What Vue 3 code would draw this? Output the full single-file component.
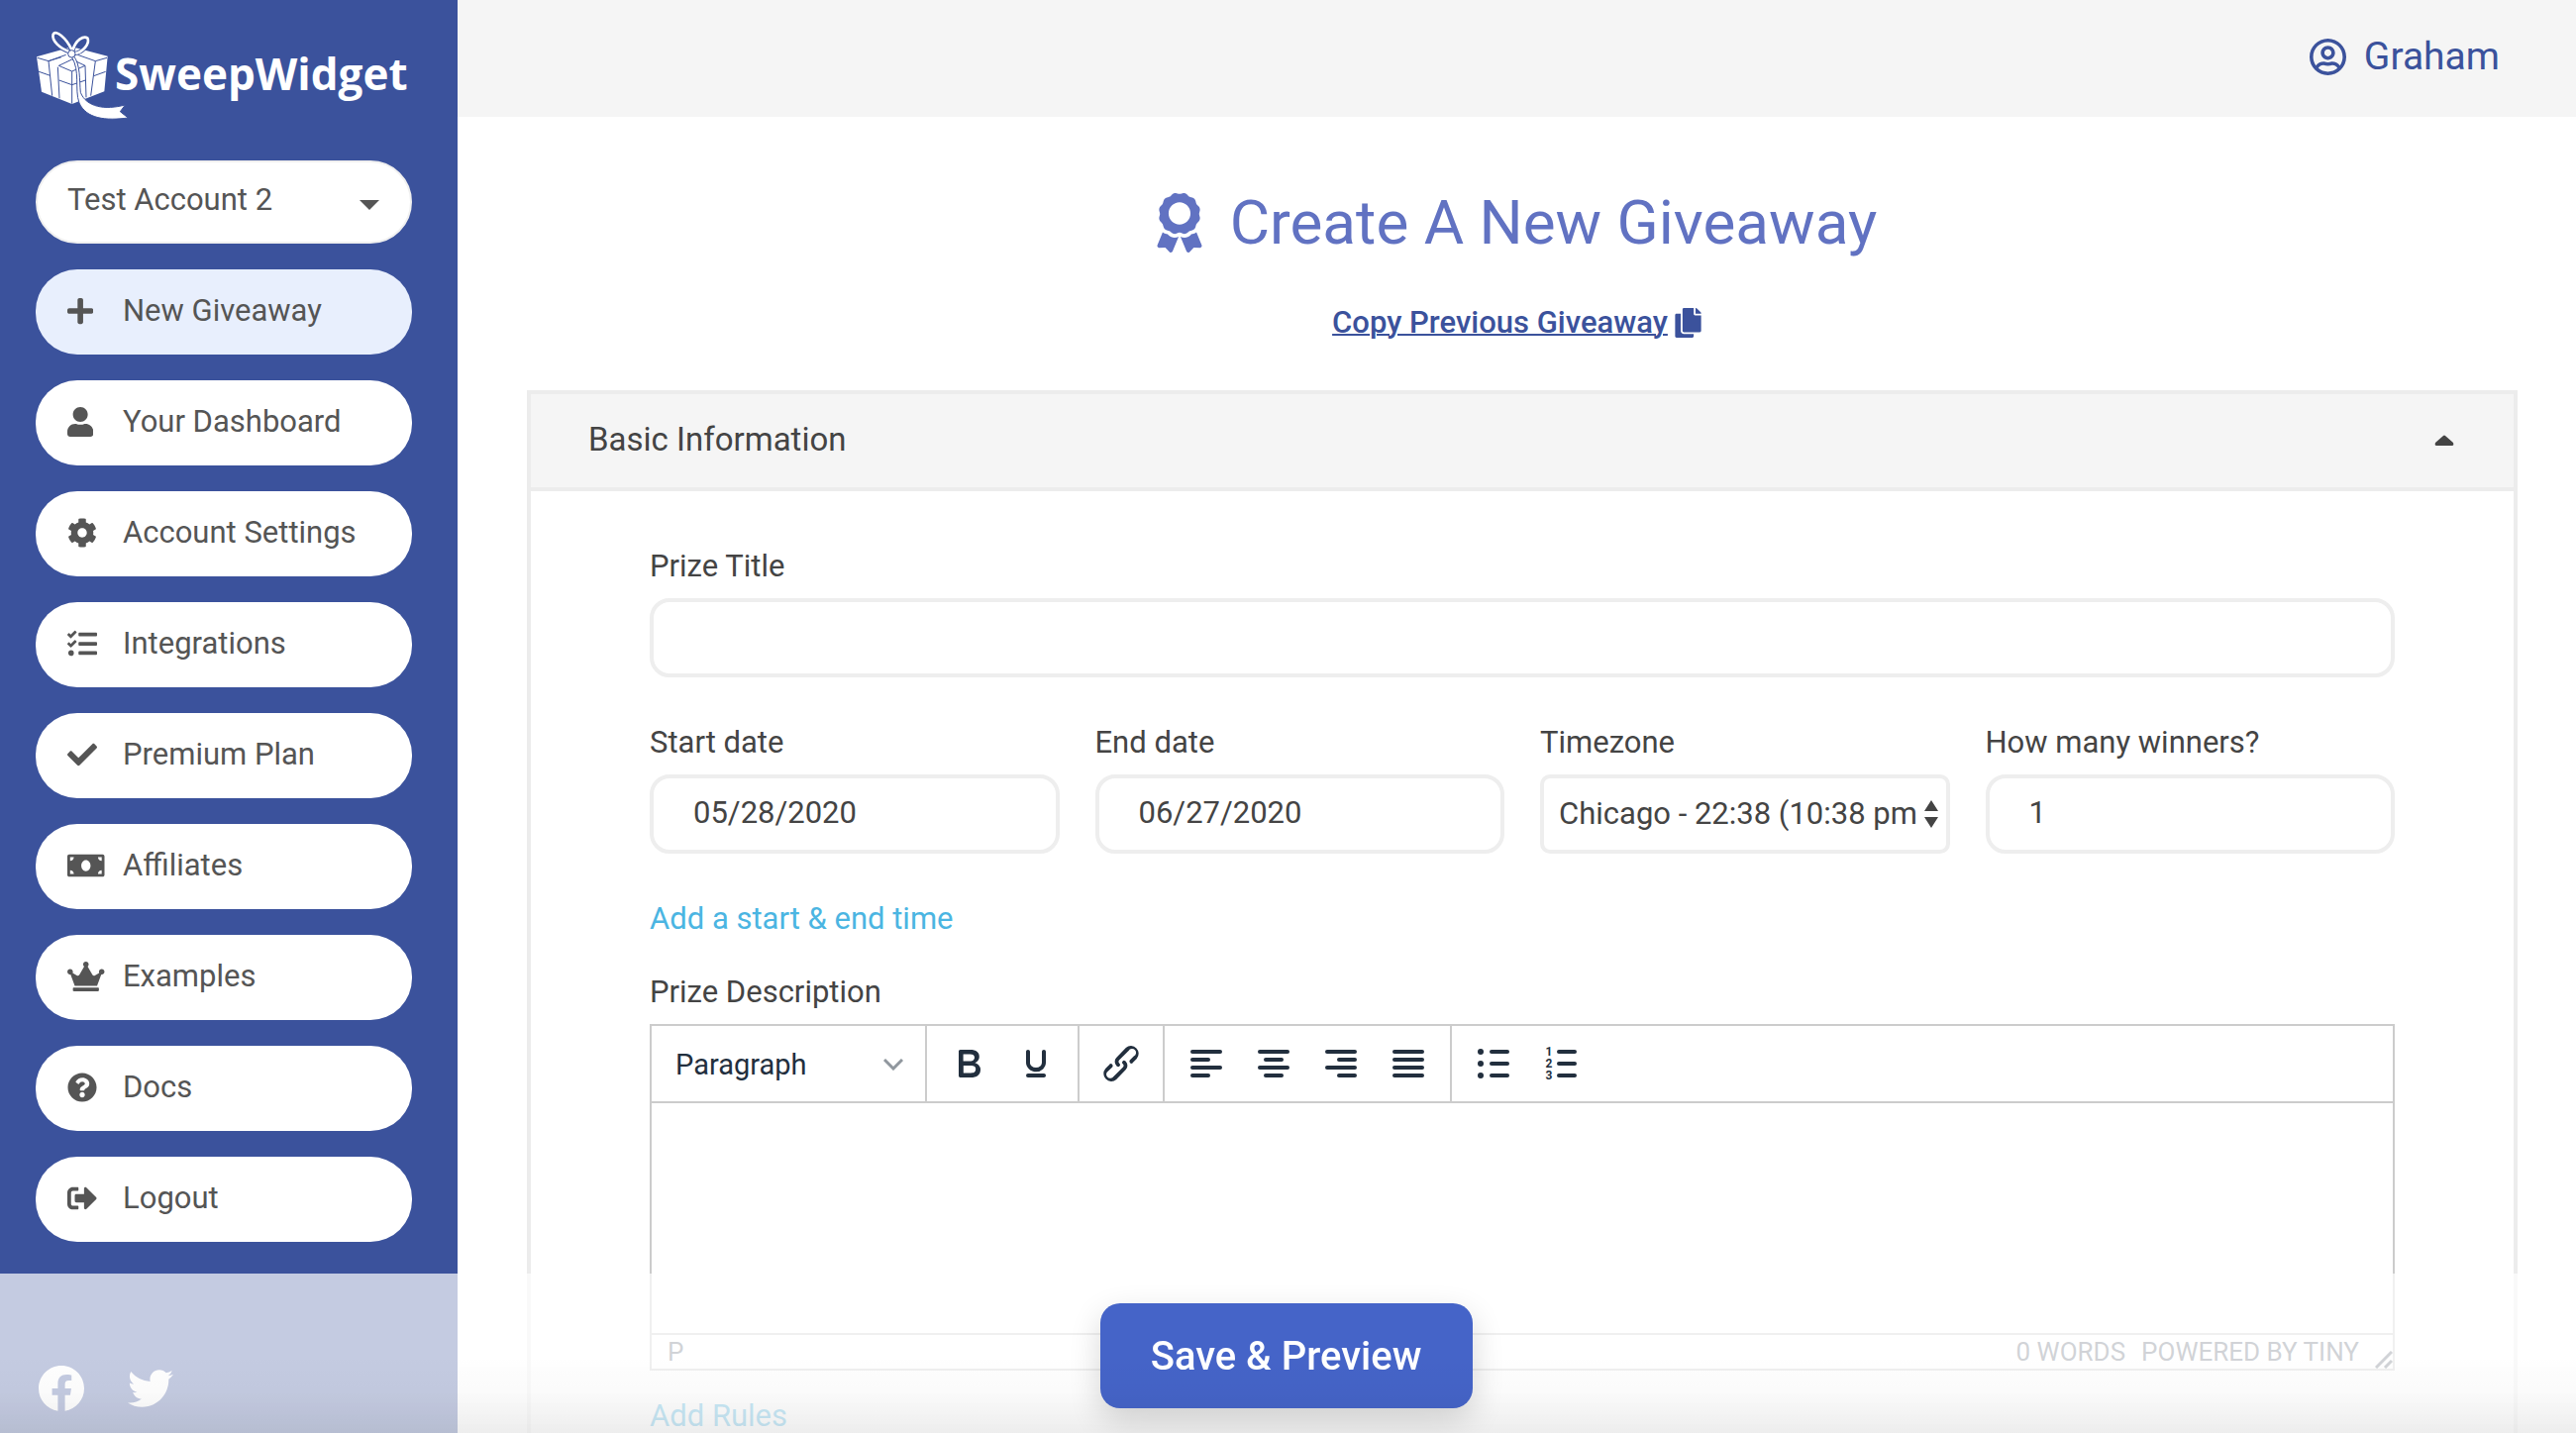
<script setup>
import { ref } from 'vue'

const account = ref('Test Account 2')
const title = ref('')
const startDate = ref('05/28/2020')
const endDate = ref('06/27/2020')
const timezone = ref('Chicago - 22:38 (10:38 pm)')
const winners = ref('1')
const description = ref('')

const menu = [
  { label: 'New Giveaway', w: 448, active: true, d: 'M416 208H272V64c0-17.67-14.33-32-32-32h-32c-17.67 0-32 14.33-32 32v144H32c-17.67 0-32 14.33-32 32v32c0 17.67 14.33 32 32 32h144v144c0 17.67 14.33 32 32 32h32c17.67 0 32-14.33 32-32V304h144c17.67 0 32-14.33 32-32v-32c0-17.67-14.33-32-32-32z' },
  { label: 'Your Dashboard', w: 448, d: 'M224 256c70.7 0 128-57.3 128-128S294.7 0 224 0 96 57.3 96 128s57.3 128 128 128zm89.6 32h-16.7c-22.2 10.2-46.9 16-72.9 16s-50.6-5.8-72.9-16h-16.7C60.2 288 0 348.2 0 422.4V464c0 26.5 21.5 48 48 48h352c26.5 0 48-21.5 48-48v-41.6c0-74.2-60.2-134.4-134.4-134.4z' },
  { label: 'Account Settings', w: 512, d: 'M487.4 315.7l-42.6-24.6c4.3-23.2 4.3-47 0-70.2l42.6-24.6c4.9-2.8 7.1-8.6 5.5-14-11.1-35.6-30-67.8-54.7-94.6-3.8-4.1-10-5.1-14.8-2.3L380.8 110c-17.9-15.4-38.5-27.3-60.8-35.1V25.8c0-5.6-3.9-10.5-9.4-11.7-36.7-8.2-74.3-7.8-109.2 0-5.5 1.2-9.4 6.1-9.4 11.7V75c-22.2 7.9-42.8 19.8-60.8 35.1L88.7 85.5c-4.9-2.8-11-1.9-14.8 2.3-24.7 26.7-43.6 58.9-54.7 94.6-1.7 5.4.6 11.2 5.5 14L67.3 221c-4.3 23.2-4.3 47 0 70.2l-42.6 24.6c-4.9 2.8-7.1 8.6-5.5 14 11.1 35.6 30 67.8 54.7 94.6 3.8 4.1 10 5.1 14.8 2.3l42.6-24.6c17.9 15.4 38.5 27.3 60.8 35.1v49.2c0 5.6 3.9 10.5 9.4 11.7 36.7 8.2 74.3 7.8 109.2 0 5.5-1.2 9.4-6.1 9.4-11.7v-49.2c22.2-7.9 42.8-19.8 60.8-35.1l42.6 24.6c4.9 2.8 11 1.9 14.8-2.3 24.7-26.7 43.6-58.9 54.7-94.6 1.5-5.5-.7-11.3-5.6-14.1zM256 336c-44.1 0-80-35.9-80-80s35.9-80 80-80 80 35.9 80 80-35.9 80-80 80z' },
  { label: 'Integrations', w: 512, d: 'M139.61 35.5a12 12 0 0 0-17 0L58.93 98.81l-22.7-22.12a12 12 0 0 0-17 0L3.53 92.41a12 12 0 0 0 0 17l47.59 47.4a12.78 12.78 0 0 0 17.61 0l15.59-15.62L156.52 69a12.09 12.09 0 0 0 .09-17zm0 159.19a12 12 0 0 0-17 0l-63.68 63.72-22.7-22.1a12 12 0 0 0-17 0L3.53 252a12 12 0 0 0 0 17L51 316.5a12.77 12.77 0 0 0 17.6 0l15.7-15.69 72.2-72.22a12 12 0 0 0 .09-16.9zM64 368c-26.49 0-48.59 21.5-48.59 48S37.53 464 64 464a48 48 0 0 0 0-96zm432 16H208a16 16 0 0 0-16 16v32a16 16 0 0 0 16 16h288a16 16 0 0 0 16-16v-32a16 16 0 0 0-16-16zm0-320H208a16 16 0 0 0-16 16v32a16 16 0 0 0 16 16h288a16 16 0 0 0 16-16V80a16 16 0 0 0-16-16zm0 160H208a16 16 0 0 0-16 16v32a16 16 0 0 0 16 16h288a16 16 0 0 0 16-16v-32a16 16 0 0 0-16-16z' },
  { label: 'Premium Plan', w: 512, d: 'M173.898 439.404l-166.4-166.4c-9.997-9.997-9.997-26.206 0-36.204l36.203-36.204c9.997-9.998 26.207-9.998 36.204 0L192 312.69 432.095 72.596c9.997-9.997 26.207-9.997 36.204 0l36.203 36.204c9.997 9.997 9.997 26.206 0 36.204l-294.4 294.401c-9.998 9.997-26.207 9.997-36.204-.001z' },
  { label: 'Affiliates', w: 640, d: 'M608 64H32C14.33 64 0 78.33 0 96v320c0 17.67 14.33 32 32 32h576c17.67 0 32-14.33 32-32V96c0-17.67-14.33-32-32-32zM48 400v-64c35.35 0 64 28.65 64 64H48zm0-224v-64h64c0 35.35-28.65 64-64 64zm272 176c-44.19 0-80-42.99-80-96 0-53.02 35.82-96 80-96s80 42.98 80 96c0 53.03-35.83 96-80 96zm272 48h-64c0-35.35 28.65-64 64-64v64zm0-224c-35.35 0-64-28.65-64-64h64v64z' },
  { label: 'Examples', w: 640, d: 'M528 448H112c-8.8 0-16 7.2-16 16v32c0 8.8 7.2 16 16 16h416c8.8 0 16-7.2 16-16v-32c0-8.8-7.2-16-16-16zm64-320c-26.5 0-48 21.5-48 48 0 7.1 1.6 13.7 4.4 19.8L476 239.2c-15.4 9.2-35.3 4-44.2-11.6L350.3 85C361 76.2 368 63 368 48c0-26.5-21.5-48-48-48s-48 21.5-48 48c0 15 7 28.2 17.7 37l-81.5 142.6c-8.9 15.6-28.9 20.8-44.2 11.6l-72.3-43.4c2.7-6 4.4-12.7 4.4-19.8 0-26.5-21.5-48-48-48S0 149.5 0 176s21.5 48 48 48c2.6 0 5.2-.4 7.7-.8L128 416h384l72.3-192.8c2.5.4 5.1.8 7.7.8 26.5 0 48-21.5 48-48s-21.5-48-48-48z' },
  { label: 'Docs', w: 512, d: 'M504 256c0 136.997-111.043 248-248 248S8 392.997 8 256C8 119.083 119.043 8 256 8s248 111.083 248 248zM262.655 90c-54.497 0-89.255 22.957-116.549 63.758-3.536 5.286-2.353 12.415 2.715 16.258l34.699 26.31c5.205 3.947 12.621 3.008 16.665-2.122 17.864-22.658 30.113-35.797 57.303-35.797 20.429 0 45.698 13.148 45.698 32.958 0 14.976-12.363 22.667-32.534 33.976C247.128 238.528 216 254.941 216 296v4c0 6.627 5.373 12 12 12h56c6.627 0 12-5.373 12-12v-1.333c0-28.462 83.186-29.647 83.186-106.667 0-58.002-60.165-102-116.531-102zM256 338c-25.365 0-46 20.635-46 46 0 25.364 20.635 46 46 46s46-20.636 46-46c0-25.365-20.635-46-46-46z' },
  { label: 'Logout', w: 512, d: 'M497 273L329 441c-15 15-41 4.5-41-17v-96H152c-13.3 0-24-10.7-24-24v-96c0-13.3 10.7-24 24-24h136V88c0-21.4 25.9-32 41-17l168 168c9.3 9.4 9.3 24.6 0 34zM192 436v-40c0-6.6-5.4-12-12-12H96c-17.7 0-32-14.3-32-32V160c0-17.7 14.3-32 32-32h84c6.6 0 12-5.4 12-12V76c0-6.6-5.4-12-12-12H96c-53 0-96 43-96 96v192c0 53 43 96 96 96h84c6.6 0 12-5.4 12-12z' }
]

// x offset and width of the four bars in each alignment icon
const alignments = [
  { label: 'Align left', bars: [[4, 16], [4, 10], [4, 16], [4, 10]] },
  { label: 'Align center', bars: [[4, 16], [7, 10], [4, 16], [7, 10]] },
  { label: 'Align right', bars: [[4, 16], [10, 10], [4, 16], [10, 10]] },
  { label: 'Justify', bars: [[4, 16], [4, 16], [4, 16], [4, 16]] }
]
</script>

<template>
  <div class="page">
    <aside class="sidebar">
      <a class="logo" href="#">
        <svg class="gift" viewBox="108 90 240 276" aria-hidden="true">
          <path fill="#fff" d="M111 172 218 142 326 170 316 277 218 315 126 278Z" />
          <g fill="none" stroke="#3b529c" stroke-width="3">
            <path d="M113 175 147 185 200 166M147 185 158 290M147 185 186 173M175 203 180 298M178 199 218 216 258 199M178 199 218 180 258 199M218 216V314M258 199 261 295M324 175 289 185 235 166M289 185 275 290M115 216 152 229M179 243 218 257 259 243M320 217 284 230" />
          </g>
          <g fill="none" stroke-linecap="round">
            <path stroke="#3b529c" stroke-width="13" d="M215 158C180 148 156 122 161 104C169 89 200 114 217 150M221 150C230 122 252 107 265 115C273 130 252 160 224 162" />
            <path stroke="#fff" stroke-width="8" d="M215 158C180 148 156 122 161 104C169 89 200 114 217 150M221 150C230 122 252 107 265 115C273 130 252 160 224 162" />
          </g>
          <path fill="#fff" stroke="#3b529c" stroke-width="3" d="M222 168C245 195 240 245 244 280C262 325 318 334 379 318L364 338 388 357C320 366 262 360 240 312C225 270 244 215 217 172Z" />
          <circle cx="217" cy="163" r="11" fill="#fff" stroke="#3b529c" stroke-width="3" />
        </svg>
        <span class="brand">SweepWidget</span>
      </a>

      <div class="account">
        <select v-model="account" aria-label="Account">
          <option>Test Account 2</option>
        </select>
        <svg viewBox="0 0 20 10" aria-hidden="true"><path d="M0 0H20L10 10Z" fill="#555" /></svg>
      </div>

      <nav class="menu">
        <a v-for="item in menu" :key="item.label" href="#" :class="{ active: item.active }">
          <span class="icon">
            <svg :viewBox="`0 0 ${item.w} 512`" aria-hidden="true"><path :d="item.d" /></svg>
          </span>
          {{ item.label }}
        </a>
      </nav>

      <div class="social">
        <a href="#" aria-label="Facebook">
          <svg viewBox="8 8 496 496"><path d="M504 256C504 119 393 8 256 8S8 119 8 256c0 123.78 90.69 226.38 209.25 245V327.69h-63V256h63v-54.64c0-62.15 37-96.48 93.67-96.48 27.14 0 55.52 4.84 55.52 4.84v61h-31.28c-30.8 0-40.41 19.12-40.41 38.73V256h68.78l-11 71.69h-57.78V501C413.31 482.38 504 379.78 504 256z" /></svg>
        </a>
        <a href="#" aria-label="Twitter">
          <svg viewBox="0 0 512 512"><path d="M459.37 151.716c.325 4.548.325 9.097.325 13.645 0 138.72-105.583 298.558-298.558 298.558-59.452 0-114.68-17.219-161.137-47.106 8.447.974 16.568 1.299 25.34 1.299 49.055 0 94.213-16.568 130.274-44.832-46.132-.975-84.792-31.188-98.112-72.772 6.498.974 12.995 1.624 19.818 1.624 9.421 0 18.843-1.3 27.614-3.573-48.081-9.747-84.143-51.98-84.143-102.985v-1.299c13.969 7.797 30.214 12.67 47.431 13.319-28.264-18.843-46.781-51.005-46.781-87.391 0-19.492 5.197-37.36 14.294-52.954 51.655 63.675 129.3 105.258 216.365 109.807-1.624-7.797-2.599-15.918-2.599-24.04 0-57.828 46.782-104.934 104.934-104.934 30.213 0 57.502 12.67 76.67 33.137 23.715-4.548 46.456-13.32 66.599-25.34-7.798 24.366-24.366 44.833-46.132 57.827 21.117-2.273 41.584-8.122 60.426-16.243-14.292 20.791-32.161 39.308-52.628 54.253z" /></svg>
        </a>
      </div>
    </aside>

    <div class="main">
      <header class="topbar">
        <a class="user" href="#">
          <svg viewBox="0 8 496 496" aria-hidden="true"><path d="M248 104c-53 0-96 43-96 96s43 96 96 96 96-43 96-96-43-96-96-96zm0 144c-26.5 0-48-21.5-48-48s21.5-48 48-48 48 21.5 48 48-21.5 48-48 48zm0-240C111 8 0 119 0 256s111 248 248 248 248-111 248-248S385 8 248 8zm0 448c-49.7 0-95.1-18.3-130.1-48.4 14.9-23 40.4-38.6 69.6-39.5 20.8 6.4 40.6 9.6 60.5 9.6s39.7-3.1 60.5-9.6c29.2 1 54.7 16.5 69.6 39.5-35 30.1-80.4 48.4-130.1 48.4zm162.7-84.1c-24.4-31.4-62.1-51.9-105.1-51.9-10.2 0-26 9.6-57.6 9.6-31.5 0-47.4-9.6-57.6-9.6-42.9 0-80.6 20.5-105.1 51.9C61.9 339.2 48 299.2 48 256c0-110.3 89.7-200 200-200s200 89.7 200 200c0 43.2-13.9 83.2-37.3 115.9z" /></svg>
          Graham
        </a>
      </header>

      <h1>
        <svg viewBox="0 0 384 512" aria-hidden="true"><path d="M97.12 362.63c-8.69-8.69-4.16-6.24-25.12-11.85-9.51-2.55-17.87-7.45-25.43-13.32L1.2 448.7c-4.39 10.77 3.81 22.47 15.43 22.03l52.69-2.01L105.56 507c8 8.44 22.04 5.81 26.43-4.96l52.05-127.62c-10.84 6.04-22.87 9.58-35.31 9.58-19.5 0-37.82-7.59-51.61-21.37zM382.8 448.7l-45.37-111.24c-7.56 5.88-15.92 10.77-25.43 13.32-21.07 5.64-16.45 3.18-25.12 11.85-13.79 13.78-32.12 21.37-51.62 21.37-12.44 0-24.47-3.55-35.31-9.58L252 502.04c4.39 10.77 18.44 13.4 26.43 4.96l36.25-38.28 52.69 2.01c11.62.44 19.82-11.27 15.43-22.03zM263 340c15.28-15.55 17.03-14.21 38.79-20.14 13.89-3.79 24.75-14.84 28.47-28.98 7.48-28.4 5.54-24.97 25.95-45.75 10.17-10.35 14.14-25.44 10.42-39.58-7.47-28.38-7.48-24.42 0-52.83 3.72-14.14-.25-29.23-10.42-39.58-20.41-20.78-18.47-17.36-25.95-45.75-3.72-14.14-14.58-25.19-28.47-28.98-27.88-7.61-24.52-5.62-44.95-26.41-10.17-10.35-25-14.4-38.89-10.61-27.87 7.6-23.98 7.61-51.9 0-13.89-3.79-28.72.25-38.89 10.61-20.41 20.78-17.05 18.8-44.94 26.41-13.89 3.79-24.75 14.84-28.47 28.98-7.47 28.39-5.54 24.97-25.95 45.75-10.17 10.35-14.15 25.44-10.42 39.58 7.47 28.36 7.48 24.4 0 52.82-3.72 14.14.25 29.23 10.42 39.59 20.41 20.78 18.47 17.35 25.95 45.75 3.72 14.14 14.58 25.19 28.47 28.98C104.6 325.96 106.27 325 121 340c13.23 13.47 33.84 15.88 49.74 5.82a39.676 39.676 0 0 1 42.53 0c15.89 10.06 36.5 7.65 49.73-5.82zM97.66 175.96c0-53.03 42.24-96.02 94.34-96.02s94.34 42.99 94.34 96.02-42.24 96.02-94.34 96.02-94.34-42.99-94.34-96.02z" /></svg>
        Create A New Giveaway
      </h1>

      <a class="copy" href="#">
        <span>Copy Previous Giveaway</span>
        <svg viewBox="0 0 448 512" aria-hidden="true"><path d="M320 448v40c0 13.255-10.745 24-24 24H24c-13.255 0-24-10.745-24-24V120c0-13.255 10.745-24 24-24h72v296c0 30.879 25.121 56 56 56h168zm0-344V0H152c-13.255 0-24 10.745-24 24v368c0 13.255 10.745 24 24 24h272c13.255 0 24-10.745 24-24V128H344c-13.2 0-24-10.8-24-24zm120.971-31.029L375.029 7.029A24 24 0 0 0 358.059 0H352v96h96v-6.059a24 24 0 0 0-7.029-16.97z" /></svg>
      </a>

      <section class="card">
        <button class="card-head" type="button">
          Basic Information
          <svg viewBox="0 0 20 11" aria-hidden="true"><path d="M9 1Q10 0 11 1L19 8Q20 11 18 11H2Q0 11 1 8Z" fill="#444" /></svg>
        </button>

        <form class="card-body" @submit.prevent>
          <div class="field">
            <label for="prize-title">Prize Title</label>
            <input id="prize-title" v-model="title" type="text" />
          </div>

          <div class="row">
            <div class="field">
              <label for="start-date">Start date</label>
              <input id="start-date" v-model="startDate" type="text" />
            </div>
            <div class="field">
              <label for="end-date">End date</label>
              <input id="end-date" v-model="endDate" type="text" />
            </div>
            <div class="field">
              <label for="timezone">Timezone</label>
              <div class="zone">
                <select id="timezone" v-model="timezone">
                  <option>Chicago - 22:38 (10:38 pm)</option>
                </select>
                <svg viewBox="0 0 14 28" aria-hidden="true"><path d="M0 11 7 0 14 11ZM0 17H14L7 28Z" fill="#444" /></svg>
              </div>
            </div>
            <div class="field">
              <label for="winners">How many winners?</label>
              <input id="winners" v-model="winners" type="text" />
            </div>
          </div>

          <a class="add time" href="#">Add a start &amp; end time</a>

          <div class="field">
            <label for="description">Prize Description</label>
            <div class="editor">
              <div class="toolbar">
                <div class="group">
                  <button class="format" type="button">
                    Paragraph
                    <svg viewBox="0 0 20 12" aria-hidden="true"><path d="M1 1 10 10 19 1" fill="none" stroke="#90979e" stroke-width="3" /></svg>
                  </button>
                </div>
                <div class="group">
                  <button type="button" aria-label="Bold"><svg viewBox="0 0 24 24"><path d="M7.8 19c-.3 0-.5 0-.6-.2l-.2-.5V5.7c0-.2 0-.4.2-.5l.6-.2h5c1.5 0 2.7.3 3.5 1 .7.6 1.1 1.4 1.1 2.5a3 3 0 01-.6 1.9c-.4.6-1 1-1.6 1.2.4.1.9.3 1.3.6s.8.7 1 1.2c.4.4.5 1 .5 1.6 0 1.3-.4 2.3-1.3 3-.8.7-2.1 1-3.8 1H7.8zm5-8.3c.6 0 1.2-.1 1.6-.5.4-.3.6-.7.6-1.3 0-1.1-.8-1.7-2.3-1.7H9.3v3.5h3.4zm.5 6c.7 0 1.3-.1 1.7-.4.4-.4.6-.9.6-1.5s-.2-1-.7-1.4c-.4-.3-1-.4-2-.4H9.4v3.8h4z" /></svg></button>
                  <button type="button" aria-label="Underline"><svg viewBox="0 0 24 24"><path d="M16 5c.6 0 1 .4 1 1v5.5a4 4 0 01-.4 1.8l-1 1.4a5.3 5.3 0 01-5.5 1 5 5 0 01-1.6-1c-.5-.4-.8-.9-1.1-1.4a4 4 0 01-.4-1.8V6c0-.6.4-1 1-1s1 .4 1 1v5.5c0 .3 0 .6.2 1l.6.7a3.3 3.3 0 002.2.8 3.4 3.4 0 002.2-.8c.3-.2.4-.5.6-.8l.2-.9V6c0-.6.4-1 1-1zM8 17h8c.6 0 1 .4 1 1s-.4 1-1 1H8a1 1 0 010-2z" /></svg></button>
                </div>
                <div class="group">
                  <button type="button" aria-label="Insert link"><svg viewBox="0 0 24 24"><path d="M6.2 12.3a1 1 0 011.4 1.4l-2.1 2a2 2 0 102.7 2.8l4.8-4.8a1 1 0 000-1.4 1 1 0 111.4-1.3 2.9 2.9 0 010 4L9.6 20a3.9 3.9 0 01-5.5-5.5l2-2zm11.6-.6a1 1 0 01-1.4-1.4l2-2a2 2 0 10-2.6-2.8L11 10.3a1 1 0 000 1.4A1 1 0 119.6 13a2.9 2.9 0 010-4L14.4 4a3.9 3.9 0 015.5 5.5l-2 2z" /></svg></button>
                </div>
                <div class="group">
                  <button v-for="a in alignments" :key="a.label" type="button" :aria-label="a.label">
                    <svg viewBox="0 0 24 24"><rect v-for="(b, i) in a.bars" :key="i" :x="b[0]" :y="5 + i * 4" :width="b[1]" height="2" rx="1" /></svg>
                  </button>
                </div>
                <div class="group">
                  <button type="button" aria-label="Bullet list">
                    <svg viewBox="0 0 24 24"><template v-for="y in [6, 12, 18]" :key="y"><circle cx="5.5" :cy="y" r="1.5" /><rect x="10" :y="y - 1" width="10" height="2" rx="1" /></template></svg>
                  </button>
                  <button type="button" aria-label="Numbered list">
                    <svg viewBox="0 0 24 24"><template v-for="n in 3" :key="n"><text class="digit" x="6" :y="n * 6 + 2" text-anchor="middle">{{ n }}</text><rect x="10" :y="n * 6 - 1" width="10" height="2" rx="1" /></template></svg>
                  </button>
                </div>
              </div>
              <textarea id="description" v-model="description"></textarea>
              <div class="status">
                <span class="path">P</span>
                <span>0 WORDS</span>
                <a href="#">POWERED BY TINY</a>
                <svg viewBox="0 0 18 18" aria-hidden="true"><path d="M1 17 17 1M10 17 17 10" fill="none" stroke="#646d78" stroke-width="3" /></svg>
              </div>
            </div>
          </div>

          <a class="add rules" href="#">Add Rules</a>
        </form>
      </section>
    </div>

    <footer class="savebar">
      <button type="button">Save &amp; Preview</button>
    </footer>
  </div>
</template>

<style>
body {
  margin: 0;
  background: #fff;
}
</style>

<style scoped>
.page,
.page * {
  box-sizing: border-box;
}
.page {
  display: flex;
  min-height: 100vh;
  font-family: Roboto, "Noto Sans", sans-serif;
  font-size: 31px;
  line-height: 46px;
  color: #444;
}
a {
  color: inherit;
  text-decoration: none;
}
svg {
  display: block;
  flex: none;
}
button,
input,
select,
textarea {
  margin: 0;
  font: inherit;
  color: inherit;
}

.sidebar {
  flex: 0 0 462px;
  min-width: 0;
  padding: 30px 46px 0 36px;
  background: #3b529c;
}
.logo {
  display: flex;
  align-items: center;
  color: #fff;
}
.gift {
  width: 80px;
  height: 92px;
  overflow: visible;
}
.brand {
  padding-bottom: 4px;
  font-family: "Open Sans", sans-serif;
  font-size: 44px;
  font-weight: 700;
}
.account {
  position: relative;
  margin: 40px 0 26px;
}
.account select {
  display: block;
  width: 100%;
  height: 84px;
  padding: 0 60px 4px 30px;
  border: 2px solid #f0f0f0;
  border-radius: 42px;
  background: #fff;
  color: #555;
  appearance: none;
}
.account svg {
  position: absolute;
  right: 33px;
  top: 40px;
  width: 20px;
  height: 10px;
  pointer-events: none;
}
.menu {
  display: flex;
  flex-direction: column;
  gap: 26px;
}
.menu a {
  display: flex;
  align-items: center;
  height: 86px;
  padding: 0 32px 2px;
  border-radius: 42px;
  background: #fff;
  color: #555;
  white-space: nowrap;
}
.menu a.active {
  background: #e8effd;
}
.icon {
  flex: 0 0 56px;
}
.icon svg {
  height: 30px;
  fill: currentColor;
}
.social {
  display: flex;
  gap: 44px;
  margin: 125px 0 0 3px;
}
.social svg {
  width: 46px;
  height: 46px;
  fill: #fff;
}

.main {
  flex: 1;
  min-width: 0;
  display: flex;
  flex-direction: column;
}
.topbar {
  display: flex;
  justify-content: flex-end;
  height: 118px;
  padding: 34px 77px 0 0;
  background: #f5f5f5;
}
.user {
  display: flex;
  align-items: center;
  gap: 18px;
  height: 46px;
  font-size: 39px;
  color: #3b529c;
}
.user svg {
  width: 37px;
  height: 37px;
  fill: currentColor;
}
h1 {
  display: flex;
  justify-content: center;
  align-items: center;
  gap: 28px;
  margin: 71px 0 0;
  font-size: 62px;
  font-weight: 400;
  line-height: 72px;
  color: #6172c2;
}
h1 svg {
  width: 46px;
  height: 60px;
  fill: currentColor;
}
.copy {
  display: flex;
  align-self: center;
  align-items: center;
  gap: 7px;
  margin: 49px 0 52px;
  line-height: 32px;
  font-weight: 500;
  color: #3b529c;
}
.copy span {
  text-decoration: underline;
  text-decoration-thickness: 2px;
}
.copy svg {
  width: 27px;
  height: 30px;
  fill: currentColor;
}

.card {
  flex: 1;
  margin: 0 59px 0 70px;
  border: 4px solid #ececec;
  border-bottom: 0;
}
.card-head {
  display: flex;
  justify-content: space-between;
  align-items: center;
  width: 100%;
  height: 98px;
  padding: 0 60px 2px 58px;
  border: 0;
  border-bottom: 4px solid #ececec;
  background: #f5f5f5;
  font-size: 33px;
}
.card-head svg {
  width: 20px;
  height: 11px;
}
.card-body {
  padding: 53px 120px 0;
}
.field {
  display: flex;
  flex-direction: column;
  gap: 9px;
  min-width: 0;
}
.row {
  display: grid;
  grid-template-columns: repeat(4, minmax(0, 1fr));
  gap: 36px;
  margin: 43px 0;
}
.field input,
.zone select {
  width: 100%;
  height: 80px;
  padding: 0 40px 4px;
  border: 4px solid #eee;
  border-radius: 20px;
  background: #fff;
  outline: 0;
}
.zone {
  position: relative;
}
.zone select {
  display: block;
  padding: 0 30px 0 15px;
  border-radius: 10px;
  appearance: none;
}
.zone svg {
  position: absolute;
  right: 12px;
  top: 26px;
  width: 14px;
  height: 28px;
  pointer-events: none;
}
.add {
  display: block;
  color: #4bb5e2;
}
.time {
  margin-bottom: 28px;
}
.rules {
  margin-top: 30px;
  line-height: 32px;
}

.editor {
  border: 2px solid #ccc;
}
.toolbar {
  display: flex;
  height: 78px;
  border-bottom: 2px solid #ccc;
}
.group {
  display: flex;
  align-items: center;
  padding: 0 8px;
}
.group + .group {
  border-left: 2px solid #ccc;
}
.group button {
  display: flex;
  justify-content: center;
  align-items: center;
  width: 68px;
  height: 68px;
  padding: 0;
  border: 0;
  background: none;
  color: #222f3e;
}
.group button svg {
  width: 48px;
  height: 48px;
  fill: currentColor;
}
.group .format {
  justify-content: space-between;
  width: 260px;
  padding: 2px 14px 0 16px;
  font-size: 29px;
}
.group .format svg {
  width: 20px;
  height: 12px;
}
.digit {
  font-size: 6px;
  font-weight: 700;
}
textarea {
  display: block;
  width: 100%;
  height: 232px;
  padding: 20px;
  border: 0;
  outline: 0;
  resize: none;
}
.status {
  display: flex;
  align-items: center;
  gap: 16px;
  height: 36px;
  padding-left: 16px;
  border-top: 2px solid #ccc;
  font-size: 26px;
  color: #646d78;
}
.status .path {
  flex: 1;
}
.status svg {
  align-self: flex-end;
  width: 18px;
  height: 18px;
}

.savebar {
  position: fixed;
  right: 0;
  bottom: 0;
  left: 0;
  display: flex;
  justify-content: center;
  padding: 30px 4px 25px 0;
  background: rgba(255, 255, 255, 0.7);
}
.savebar::after {
  content: "";
  position: absolute;
  right: 0;
  bottom: 0;
  left: 0;
  height: 80px;
  background: linear-gradient(rgba(0, 0, 0, 0), rgba(0, 0, 0, 0.02) 50%, rgba(0, 0, 0, 0.07));
  pointer-events: none;
}
.savebar button {
  width: 376px;
  height: 106px;
  padding: 2px 0 0;
  border: 0;
  border-radius: 20px;
  background: #4564c8;
  box-shadow: 0 12px 32px rgba(0, 0, 0, 0.16);
  font-size: 40px;
  font-weight: 500;
  color: #fff;
}
</style>
